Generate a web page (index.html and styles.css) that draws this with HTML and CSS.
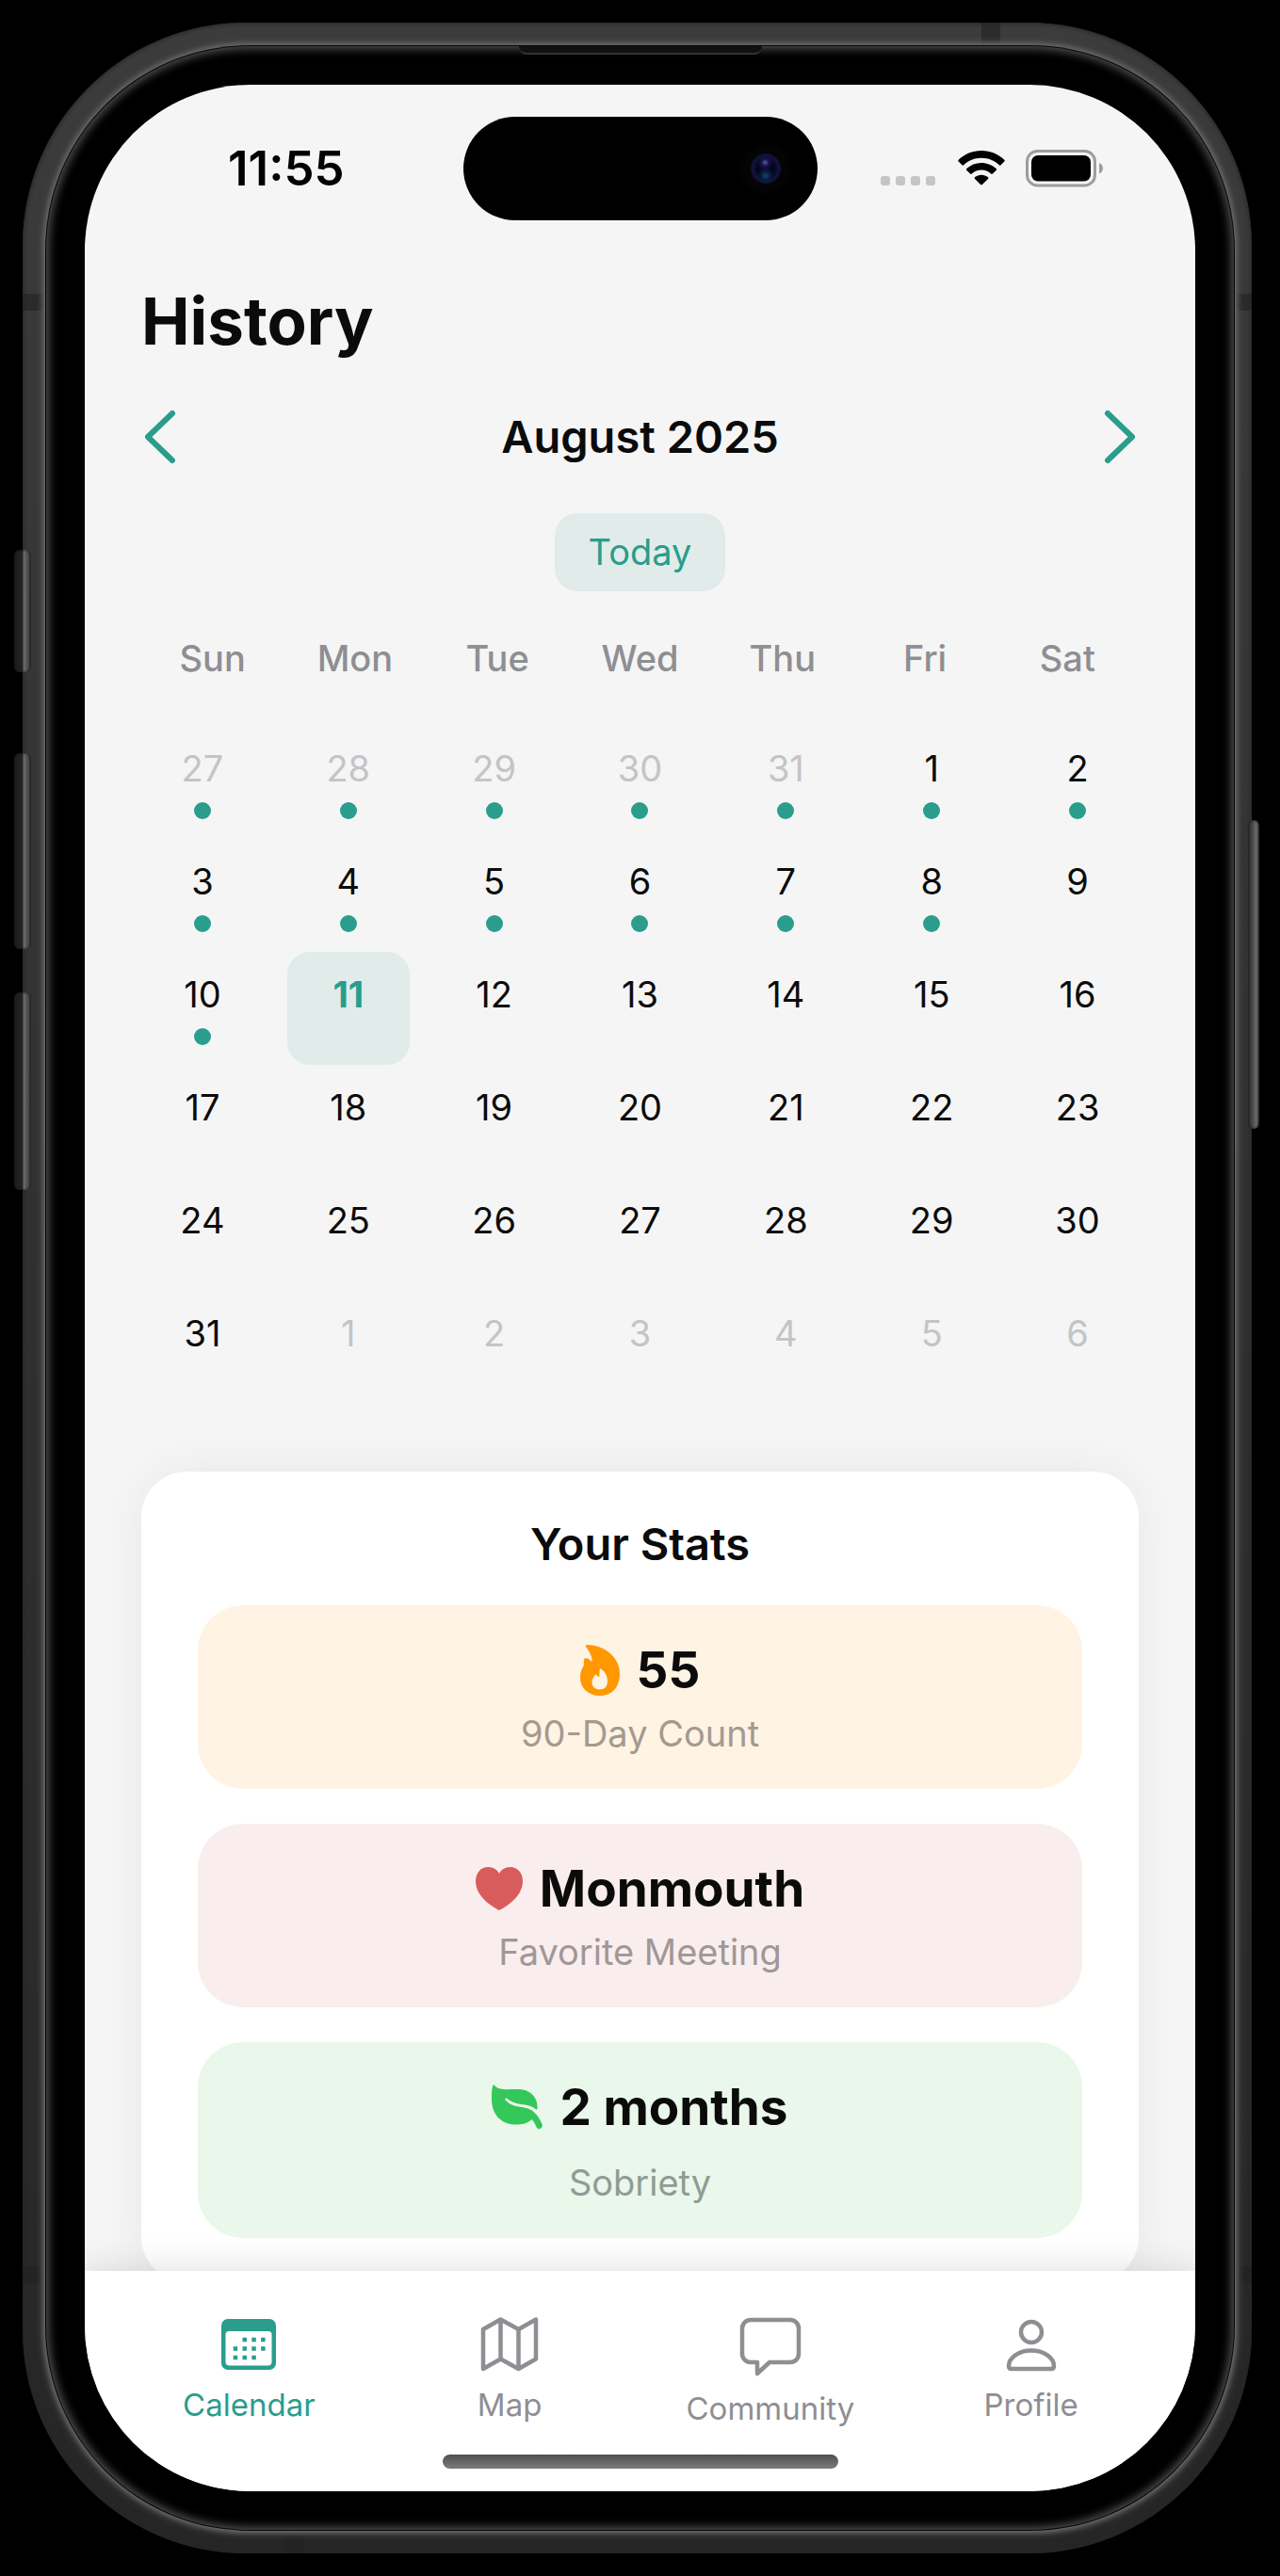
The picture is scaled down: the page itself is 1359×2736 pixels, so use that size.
FILE: index.html
```html
<!DOCTYPE html>
<html lang="en">
<head>
<meta charset="utf-8">
<meta name="viewport" content="width=device-width, initial-scale=1">
<title>History</title>
<link rel="stylesheet" href="styles.css">
</head>
<body>
<div class="phone">
  <span class="side-button side-action"></span>
  <span class="side-button side-up"></span>
  <span class="side-button side-down"></span>
  <span class="side-button side-power"></span>
  <span class="band band-top"></span>
  <span class="band band-bottom"></span>
  <span class="band band-left-high"></span>
  <span class="band band-left-low"></span>
  <span class="band band-right-high"></span>
  <span class="band band-right-low"></span>
  <div class="bezel">
    <span class="earpiece"></span>
    <div class="screen">
      <header class="status">
        <time class="clock">11:55</time>
        <div class="island"><span class="camera"></span></div>
        <div class="signals">
          <svg width="60" height="38" viewBox="0 0 60 38" fill="#c5c5c6"><rect x="0" y="27" width="10" height="10" rx="3"/><rect x="16" y="27" width="10" height="10" rx="3"/><rect x="32" y="27" width="10" height="10" rx="3"/><rect x="48" y="27" width="10" height="10" rx="3"/></svg>
          <svg width="50" height="38" viewBox="0 0 50 38"><path d="M25 0C34.500 0 43 3.600 49.300 9.800a1.300 1.300 0 0 1 0 1.800l-3.700 3.700a1.300 1.300 0 0 1-1.800 0C38.800 10.500 32.200 7.800 25 7.800S11.200 10.500 6.200 15.300a1.300 1.300 0 0 1-1.800 0L.7 11.600a1.300 1.300 0 0 1 0-1.800C7 3.600 15.500 0 25 0ZM25 12.900c6 0 11.500 2.300 15.600 6.100a1.300 1.300 0 0 1 0 1.900l-3.700 3.600a1.300 1.300 0 0 1-1.800 0A14.800 14.800 0 0 0 25 20.600c-3.900 0-7.400 1.500-10.100 3.900a1.300 1.300 0 0 1-1.800 0l-3.700-3.600a1.300 1.300 0 0 1 0-1.900A22.900 22.900 0 0 1 25 12.900ZM25 25.700c2.600 0 5 .9 6.900 2.400.6.500.6 1.300.1 1.900l-6.100 6.100a1.300 1.300 0 0 1-1.800 0L18 30c-.5-.6-.5-1.400.1-1.900 1.900-1.500 4.300-2.400 6.900-2.400Z"/></svg>
          <svg width="83" height="40" viewBox="0 0 83 40"><rect x="1.500" y="1.500" width="72" height="36.500" rx="11" fill="none" stroke="#9d9d9d" stroke-width="3"/><rect x="6" y="6" width="63" height="27.500" rx="7"/><path d="M78 14c2.600 1 4 3.100 4 5.800s-1.400 4.800-4 5.800z" fill="#9d9d9d"/></svg>
        </div>
      </header>

      <main class="content">
        <h1 class="title">History</h1>
        <div class="month-bar">
          <button class="arrow" type="button" aria-label="Previous month"><svg width="36" height="60" viewBox="0 0 36 60"><path d="M33 5 7 30l26 25"/></svg></button>
          <h2 class="month">August 2025</h2>
          <button class="arrow" type="button" aria-label="Next month"><svg width="36" height="60" viewBox="0 0 36 60"><path d="m3 5 26 25L3 55"/></svg></button>
        </div>
        <button class="today" type="button">Today</button>
        <div class="weekdays"><span>Sun</span><span>Mon</span><span>Tue</span><span>Wed</span><span>Thu</span><span>Fri</span><span>Sat</span></div>
        <div class="days">
          <button class="day outside marked">27</button><button class="day outside marked">28</button><button class="day outside marked">29</button><button class="day outside marked">30</button><button class="day outside marked">31</button><button class="day marked">1</button><button class="day marked">2</button>
          <button class="day marked">3</button><button class="day marked">4</button><button class="day marked">5</button><button class="day marked">6</button><button class="day marked">7</button><button class="day marked">8</button><button class="day">9</button>
          <button class="day marked">10</button><button class="day current" aria-current="date">11</button><button class="day">12</button><button class="day">13</button><button class="day">14</button><button class="day">15</button><button class="day">16</button>
          <button class="day">17</button><button class="day">18</button><button class="day">19</button><button class="day">20</button><button class="day">21</button><button class="day">22</button><button class="day">23</button>
          <button class="day">24</button><button class="day">25</button><button class="day">26</button><button class="day">27</button><button class="day">28</button><button class="day">29</button><button class="day">30</button>
          <button class="day">31</button><button class="day outside">1</button><button class="day outside">2</button><button class="day outside">3</button><button class="day outside">4</button><button class="day outside">5</button><button class="day outside">6</button>
        </div>

        <section class="stats">
          <h2 class="stats-title">Your Stats</h2>
          <div class="stat stat-count">
            <p class="stat-value"><svg width="42" height="56" viewBox="0 0 42 56" fill="#ff9800"><path fill-rule="evenodd" d="M6 3C5 1.500 6.500 1 8 1c15 0 34 11 34 31 0 14-8.500 23-21 23C8.500 55 0 47 0 35.500c0-6 2-9.500 4-13-.3-2.500-.2-5 .5-7 3-1 6 1.300 8 3.500C13 13 9.500 8 6 3Zm15 23c-.8 3.500-.2 6-.8 9-1.700-.5-2.700-1.500-3.400-3C14 35 12.500 38 12.500 41c0 4.500 3.500 7.500 8.300 7.500s8.200-3.300 8.200-8.500C29 34 26 28.500 21 26Z"/></svg>55</p>
            <p class="stat-label">90-Day Count</p>
          </div>
          <div class="stat stat-meeting">
            <p class="stat-value"><svg width="50" height="48" viewBox="0 0 50 48" fill="#d95c5c"><path d="M25 47C21 45 0 34 0 16 0 6.500 6 1 13.500 1 19 1 23 4 25 8c2-4 6-7 11.500-7C44 1 50 6.500 50 16c0 18-21 29-25 31Z"/></svg>Monmouth</p>
            <p class="stat-label">Favorite Meeting</p>
          </div>
          <div class="stat stat-sober">
            <p class="stat-value"><svg width="54" height="48" viewBox="0 0 54 48" fill="#34c759"><path d="M3 1c5 5.500 14 4 24 4 14 0 22 8 21.500 20 0 1.500-1 2-2 1C39 19 28 24 16.500 15c-1.500-1.200-3 .500-1.500 2 9 9.500 21 4.500 29 11.500 5 4 7.500 9 9.500 13.500 1.500 4-3 7-5.500 4-2-4-3-7-5.500-9C37 42 30 43 24 42.500 9 41.500 0 31 0 15 0 10 0 6 1 2 1.500.500 2.300.300 3 1Z"/></svg>2 months</p>
            <p class="stat-label">Sobriety</p>
          </div>
        </section>
      </main>

      <nav class="tabs">
        <a class="tab active" href="#calendar"><svg width="60" height="60" viewBox="0 0 60 60"><path fill="#2a9d8c" fill-rule="evenodd" d="M8 3h44a7 7 0 0 1 7 7v40a7 7 0 0 1-7 7H8a7 7 0 0 1-7-7V10a7 7 0 0 1 7-7Zm1 13a3.500 3.500 0 0 0-3.500 3.500v29A4 4 0 0 0 9.500 52.500h41a4 4 0 0 0 4-4v-29A3.500 3.500 0 0 0 51 16Z"/><path stroke="#2a9d8c" stroke-width="4.500" stroke-dasharray="4.500 5.300" d="M23.500 25h26M13.700 34.500h36M13.700 44h26"/></svg>Calendar</a>
        <a class="tab" href="#map"><svg width="64" height="60" viewBox="0 0 64 60" fill="none" stroke="#8e8e93" stroke-width="4.500" stroke-linejoin="round"><path d="M4 14 22.500 3.500 41.500 14 60 3.500v42L41.500 56 22.500 45.500 4 56ZM22.500 3.500v42M41.500 14v42"/></svg>Map</a>
        <a class="tab" href="#community"><svg width="66" height="64" viewBox="0 0 66 64" fill="none" stroke="#8e8e93" stroke-width="4.500" stroke-linejoin="round"><path d="M12 4h42a9 9 0 0 1 9 9v27a9 9 0 0 1-9 9H32L19 61V49h-7a9 9 0 0 1-9-9V13a9 9 0 0 1 9-9Z"/></svg>Community</a>
        <a class="tab" href="#profile"><svg width="60" height="60" viewBox="0 0 60 60" fill="none" stroke="#8e8e93" stroke-width="4.500" stroke-linejoin="round"><circle cx="30" cy="17" r="11"/><path d="M9 56c-2 0-3-1-3-3C6 44 17 36.500 30 36.500S54 44 54 53c0 2-1 3-3 3Z"/></svg>Profile</a>
      </nav>
      <span class="home-indicator"></span>
    </div>
  </div>
</div>
</body>
</html>
```

FILE: styles.css
```css
* { box-sizing: border-box; }

body {
  margin: 0;
  padding: 24px 30px 24px 24px;
  background: #000;
  color: #0b0b0b;
  font-family: Inter, "Liberation Sans", sans-serif;
}

h1, h2, p { margin: 0; }

button {
  padding: 0;
  border: 0;
  background: none;
  color: inherit;
  font: inherit;
}

/* Device */
.phone {
  position: relative;
  padding: 25px 19px 25px 25px;
  border-radius: 237px;
  background: linear-gradient(#3c3c3c, #303030 50%, #262626);
  box-shadow: inset 0 0 4px 1px #262626;
}

.bezel {
  position: relative;
  padding: 41px;
  border-radius: 216px;
  background: #000;
  box-shadow: 0 0 0 1px #080808, 0 0 5px 3px #6a6a6a, 0 0 9px 4px #4c4c4c, inset 0 0 10px 3px #505050;
}

.side-button {
  position: absolute;
  left: -9px;
  width: 18px;
  border-radius: 6px;
  background: linear-gradient(90deg, #1c1c1c, #242424 50%, #6c6c6c 56%, #484848 85%, #2c2c2c);
  box-shadow: inset 0 0 3px #111;
}

.side-action { top: 560px; height: 130px; }
.side-up { top: 776px; height: 208px; }
.side-down { top: 1030px; height: 210px; }
.side-power { top: 847px; right: -8px; left: auto; width: 12px; height: 328px; background: linear-gradient(90deg, #2c2c2c, #484848 40%, #6c6c6c 75%, #333); }

.band { position: absolute; background: #222; opacity: .6; }
.band-top, .band-bottom { width: 20px; height: 22px; }
.band-top { top: 0; left: 78%; }
.band-bottom { bottom: 0; left: 278px; }
.band-left-high, .band-left-low, .band-right-high, .band-right-low { width: 18px; height: 18px; }
.band-left-high, .band-left-low { left: 0; width: 22px; }
.band-right-high, .band-right-low { right: 0; }
.band-left-high, .band-right-high { top: 288px; }
.band-left-low, .band-right-low { bottom: 287px; }

.earpiece {
  position: absolute;
  top: 0;
  left: calc(50% - 129px);
  width: 258px;
  height: 9px;
  border-bottom: 2px solid #333;
  border-radius: 0 0 8px 8px;
  background: #111;
}

.screen {
  position: relative;
  overflow: hidden;
  border-radius: 176px;
  background: #f5f5f5;
}

/* Status bar */
.status {
  display: grid;
  grid-template-columns: 1fr 376px 1fr;
  align-items: center;
  padding-top: 34px;
}

.clock {
  padding-left: 152px;
  color: #000;
  font-size: 51px;
  font-weight: 600;
  line-height: 60px;
}

.island {
  display: flex;
  align-items: center;
  justify-content: flex-end;
  height: 110px;
  padding-right: 39px;
  border-radius: 55px;
  background: #000;
}

.camera {
  width: 32px;
  height: 32px;
  border-radius: 50%;
  background: radial-gradient(circle at 48% 30%, #5a5a9a 0, #14144a 14%, transparent 30%), radial-gradient(circle at 50% 74%, #0c4a60 0, #0a1c40 16%, transparent 32%), radial-gradient(#05051c 40%, #12123c 60%, #08081c);
  box-shadow: 0 0 6px 10px #050507;
}

.signals {
  display: flex;
  align-items: center;
  gap: 22px;
  padding-left: 67px;
}

/* History */
.content { padding: 65px 60px 0; }

.title {
  font-size: 69px;
  font-weight: 700;
  line-height: 84px;
}

.month-bar {
  display: flex;
  align-items: center;
  justify-content: space-between;
  margin-top: 51px;
}

.arrow { display: flex; }

.arrow svg {
  fill: none;
  stroke: #2a9d8c;
  stroke-width: 6;
  stroke-linecap: round;
  stroke-linejoin: round;
}

.month, .stats-title {
  font-size: 47px;
  font-weight: 600;
  line-height: 56px;
}

.today {
  display: block;
  margin: 51px auto 0;
  padding: 18px 36px;
  border-radius: 24px;
  background: #e1ecea;
  color: #2a9d8c;
  font-size: 38px;
  line-height: 47px;
}

.weekdays {
  display: grid;
  grid-template-columns: repeat(7, 1fr);
  margin-top: 46px;
  color: #8e8e93;
  font-size: 38px;
  font-weight: 500;
  line-height: 50px;
  text-align: center;
}

.days {
  display: grid;
  grid-template-columns: repeat(7, 1fr);
  grid-auto-rows: 120px;
  column-gap: 25px;
  margin-top: 47px;
}

.day {
  display: flex;
  flex-direction: column;
  align-items: center;
  gap: 13px;
  padding-top: 22px;
  border-radius: 24px;
  font-size: 38px;
  line-height: 46px;
}

.outside { color: #c4c4c6; }

.marked::after {
  width: 18px;
  height: 18px;
  border-radius: 50%;
  background: #2a9d8c;
  content: "";
}

.current {
  background: #e1ecea;
  color: #2a9d8c;
  font-weight: 700;
}

/* Stats */
.stats {
  display: flex;
  flex-direction: column;
  gap: 37px;
  margin-top: 72px;
  padding: 49px 60px 47px;
  border-radius: 48px;
  background: #fff;
  box-shadow: 0 0 48px rgba(0, 0, 0, .06);
  text-align: center;
}

.stat {
  padding: 36px;
  border-radius: 48px;
}

.stat-count { background: #fff3e4; }
.stat-meeting { background: #f9eeed; }
.stat-sober { background: #eaf7eb; }

.stat-value {
  display: flex;
  align-items: center;
  justify-content: center;
  gap: 18px;
  font-size: 53px;
  font-weight: 700;
  line-height: 66px;
}

.stat-label {
  margin-top: 11px;
  font-size: 38px;
  line-height: 46px;
}

.stat-count .stat-label { color: #a49a8f; }
.stat-meeting .stat-label { color: #a09798; }
.stat-sober .stat-label { margin-top: 24px; color: #8f9c93; }

/* Tab bar */
.tabs {
  position: relative;
  display: grid;
  grid-template-columns: repeat(4, 1fr);
  align-items: start;
  height: 234px;
  margin-top: -12px;
  padding: 48px 36px 0;
  background: #fff;
  box-shadow: 0 0 36px rgba(0, 0, 0, .14);
}

.tab {
  display: flex;
  flex-direction: column;
  align-items: center;
  gap: 14px;
  color: #8e8e93;
  font-size: 33px;
  line-height: 40px;
  text-decoration: none;
}

.active { color: #2a9d8c; }

.home-indicator {
  position: absolute;
  bottom: 24px;
  left: calc(50% - 210px);
  width: 420px;
  height: 15px;
  border-radius: 8px;
  background: linear-gradient(#505050, #7c7c7c);
}
```
